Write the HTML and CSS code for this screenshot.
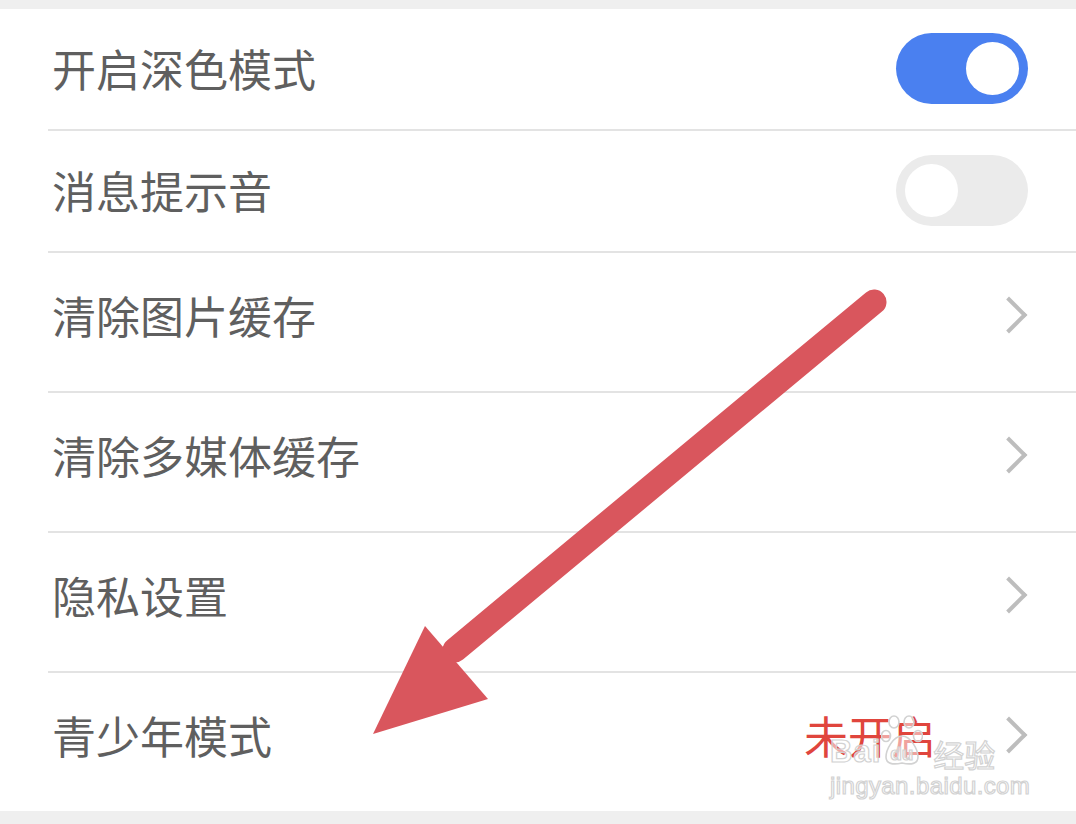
FILE: index.html
```html
<!DOCTYPE html>
<html lang="zh-CN">
<head>
  <meta charset="UTF-8">
  <title>设置</title>
  <link rel="stylesheet" href="styles.css">
</head>
<body>
  <div class="page">
    <div class="gap-top"></div>
    <ul class="settings">
      <li class="row short">
        <div class="row-inner">
          <span class="label">开启深色模式</span>
          <span class="switch on"><span class="knob"></span></span>
        </div>
      </li>
      <li class="row short">
        <div class="row-inner">
          <span class="label">消息提示音</span>
          <span class="switch"><span class="knob"></span></span>
        </div>
      </li>
      <li class="row">
        <div class="row-inner">
          <span class="label">清除图片缓存</span>
          <span class="chevron"></span>
        </div>
      </li>
      <li class="row">
        <div class="row-inner">
          <span class="label">清除多媒体缓存</span>
          <span class="chevron"></span>
        </div>
      </li>
      <li class="row">
        <div class="row-inner">
          <span class="label">隐私设置</span>
          <span class="chevron"></span>
        </div>
      </li>
      <li class="row last">
        <div class="row-inner">
          <span class="label">青少年模式</span>
          <span class="value">未开启</span>
          <span class="chevron"></span>
        </div>
      </li>
    </ul>
    <div class="gap-bottom"></div>

    <!-- annotation arrow over the list -->
    <svg class="arrow" width="1076" height="824" viewBox="0 0 1076 824">
      <line x1="874" y1="302" x2="455" y2="650" stroke="#d9565d" stroke-width="25" stroke-linecap="round"/>
      <polygon points="425,626 488,699 373,734" fill="#d9565d"/>
    </svg>

    <!-- watermark -->
    <div class="watermark">
      <div class="wm-top">
        <span class="wm-bai">Bai</span>
        <span class="wm-paw">
          <svg width="42" height="52" viewBox="0 0 42 52">
            <g fill="rgba(255,255,255,0.5)" stroke="#d2d2d2" stroke-width="1.6">
              <ellipse cx="13" cy="8" rx="5" ry="6"/>
              <ellipse cx="28" cy="8" rx="5" ry="6"/>
              <ellipse cx="5" cy="22" rx="4.5" ry="5.5"/>
              <ellipse cx="37" cy="22" rx="4.5" ry="5.5"/>
              <path d="M21 22 C12 22 5 36 5 43 C5 50 12 51 21 49 C30 51 37 50 37 43 C37 36 30 22 21 22 Z"/>
            </g>
          </svg>
          <span class="wm-du">du</span>
        </span>
        <span class="wm-jy">经验</span>
      </div>
      <div class="wm-url">jingyan.baidu.com</div>
    </div>
  </div>
</body>
</html>
```

FILE: styles.css
```css
/* base */
html, body {
  margin: 0;
  padding: 0;
  background: #ffffff;
}
body {
  font-family: "Noto Sans CJK SC", "Noto Sans", sans-serif;
  color: #5f5f5f;
}
.page {
  position: relative;
  width: 1076px;
  height: 824px;
  overflow: hidden;
  display: flex;
  flex-direction: column;
}
.gap-top {
  height: 9px;
  background: #efefef;
}
.gap-bottom {
  flex: 1;
  background: #efefef;
}

/* list */
.settings {
  list-style: none;
  margin: 0;
  padding: 0;
  background: #fff;
}
.row {
  padding-left: 48px;
}
.row-inner {
  box-sizing: border-box;
  height: 140px;
  padding: 0 48px 14px 4px;
  display: flex;
  align-items: center;
  border-bottom: 2px solid #e3e3e3;
}
.row.short .row-inner {
  height: 122px;
  padding-bottom: 2px;
}
.row.last .row-inner {
  height: 138px;
  border-bottom: none;
}
.label {
  flex: 1;
  font-size: 44px;
  line-height: 1;
  color: #5f5f5f;
}
.value {
  font-size: 44px;
  line-height: 1;
  color: #e0453d;
  margin-right: 60px;
}

/* switches */
.switch {
  position: relative;
  width: 132px;
  height: 71px;
  border-radius: 36px;
  background: #ebebeb;
}
.switch .knob {
  position: absolute;
  top: 9px;
  left: 9px;
  width: 53px;
  height: 53px;
  border-radius: 50%;
  background: #fff;
}
.switch.on {
  background: #4a80f0;
}
.switch.on .knob {
  left: auto;
  right: 9px;
}

/* chevron */
.chevron {
  width: 22px;
  height: 22px;
  border-top: 4px solid #bdbdbd;
  border-right: 4px solid #bdbdbd;
  transform: rotate(45deg);
  margin-right: 6px;
}

/* overlay */
.arrow {
  position: absolute;
  left: 0;
  top: 0;
}
.watermark {
  position: absolute;
  left: 830px;
  top: 712px;
  width: 200px;
  color: rgba(255, 255, 255, 0.55);
  -webkit-text-stroke: 1.2px #d2d2d2;
  font-family: "Liberation Sans", sans-serif;
}
.wm-top {
  display: flex;
  align-items: flex-end;
  height: 54px;
}
.wm-bai {
  font-size: 31px;
  font-weight: bold;
  line-height: 1;
  margin-bottom: -1px;
  letter-spacing: 1px;
}
.wm-paw {
  position: relative;
  width: 42px;
  height: 52px;
}
.wm-paw svg {
  display: block;
}
.wm-du {
  position: absolute;
  left: 9px;
  bottom: 3px;
  font-size: 19px;
  font-weight: bold;
  line-height: 1;
}
.wm-jy {
  font-family: "Noto Sans CJK SC", sans-serif;
  font-size: 31px;
  line-height: 1;
  margin-left: 10px;
  margin-bottom: -3px;
}
.wm-url {
  font-size: 24px;
  line-height: 1;
  margin-top: 8px;
  letter-spacing: 0.4px;
}
```
